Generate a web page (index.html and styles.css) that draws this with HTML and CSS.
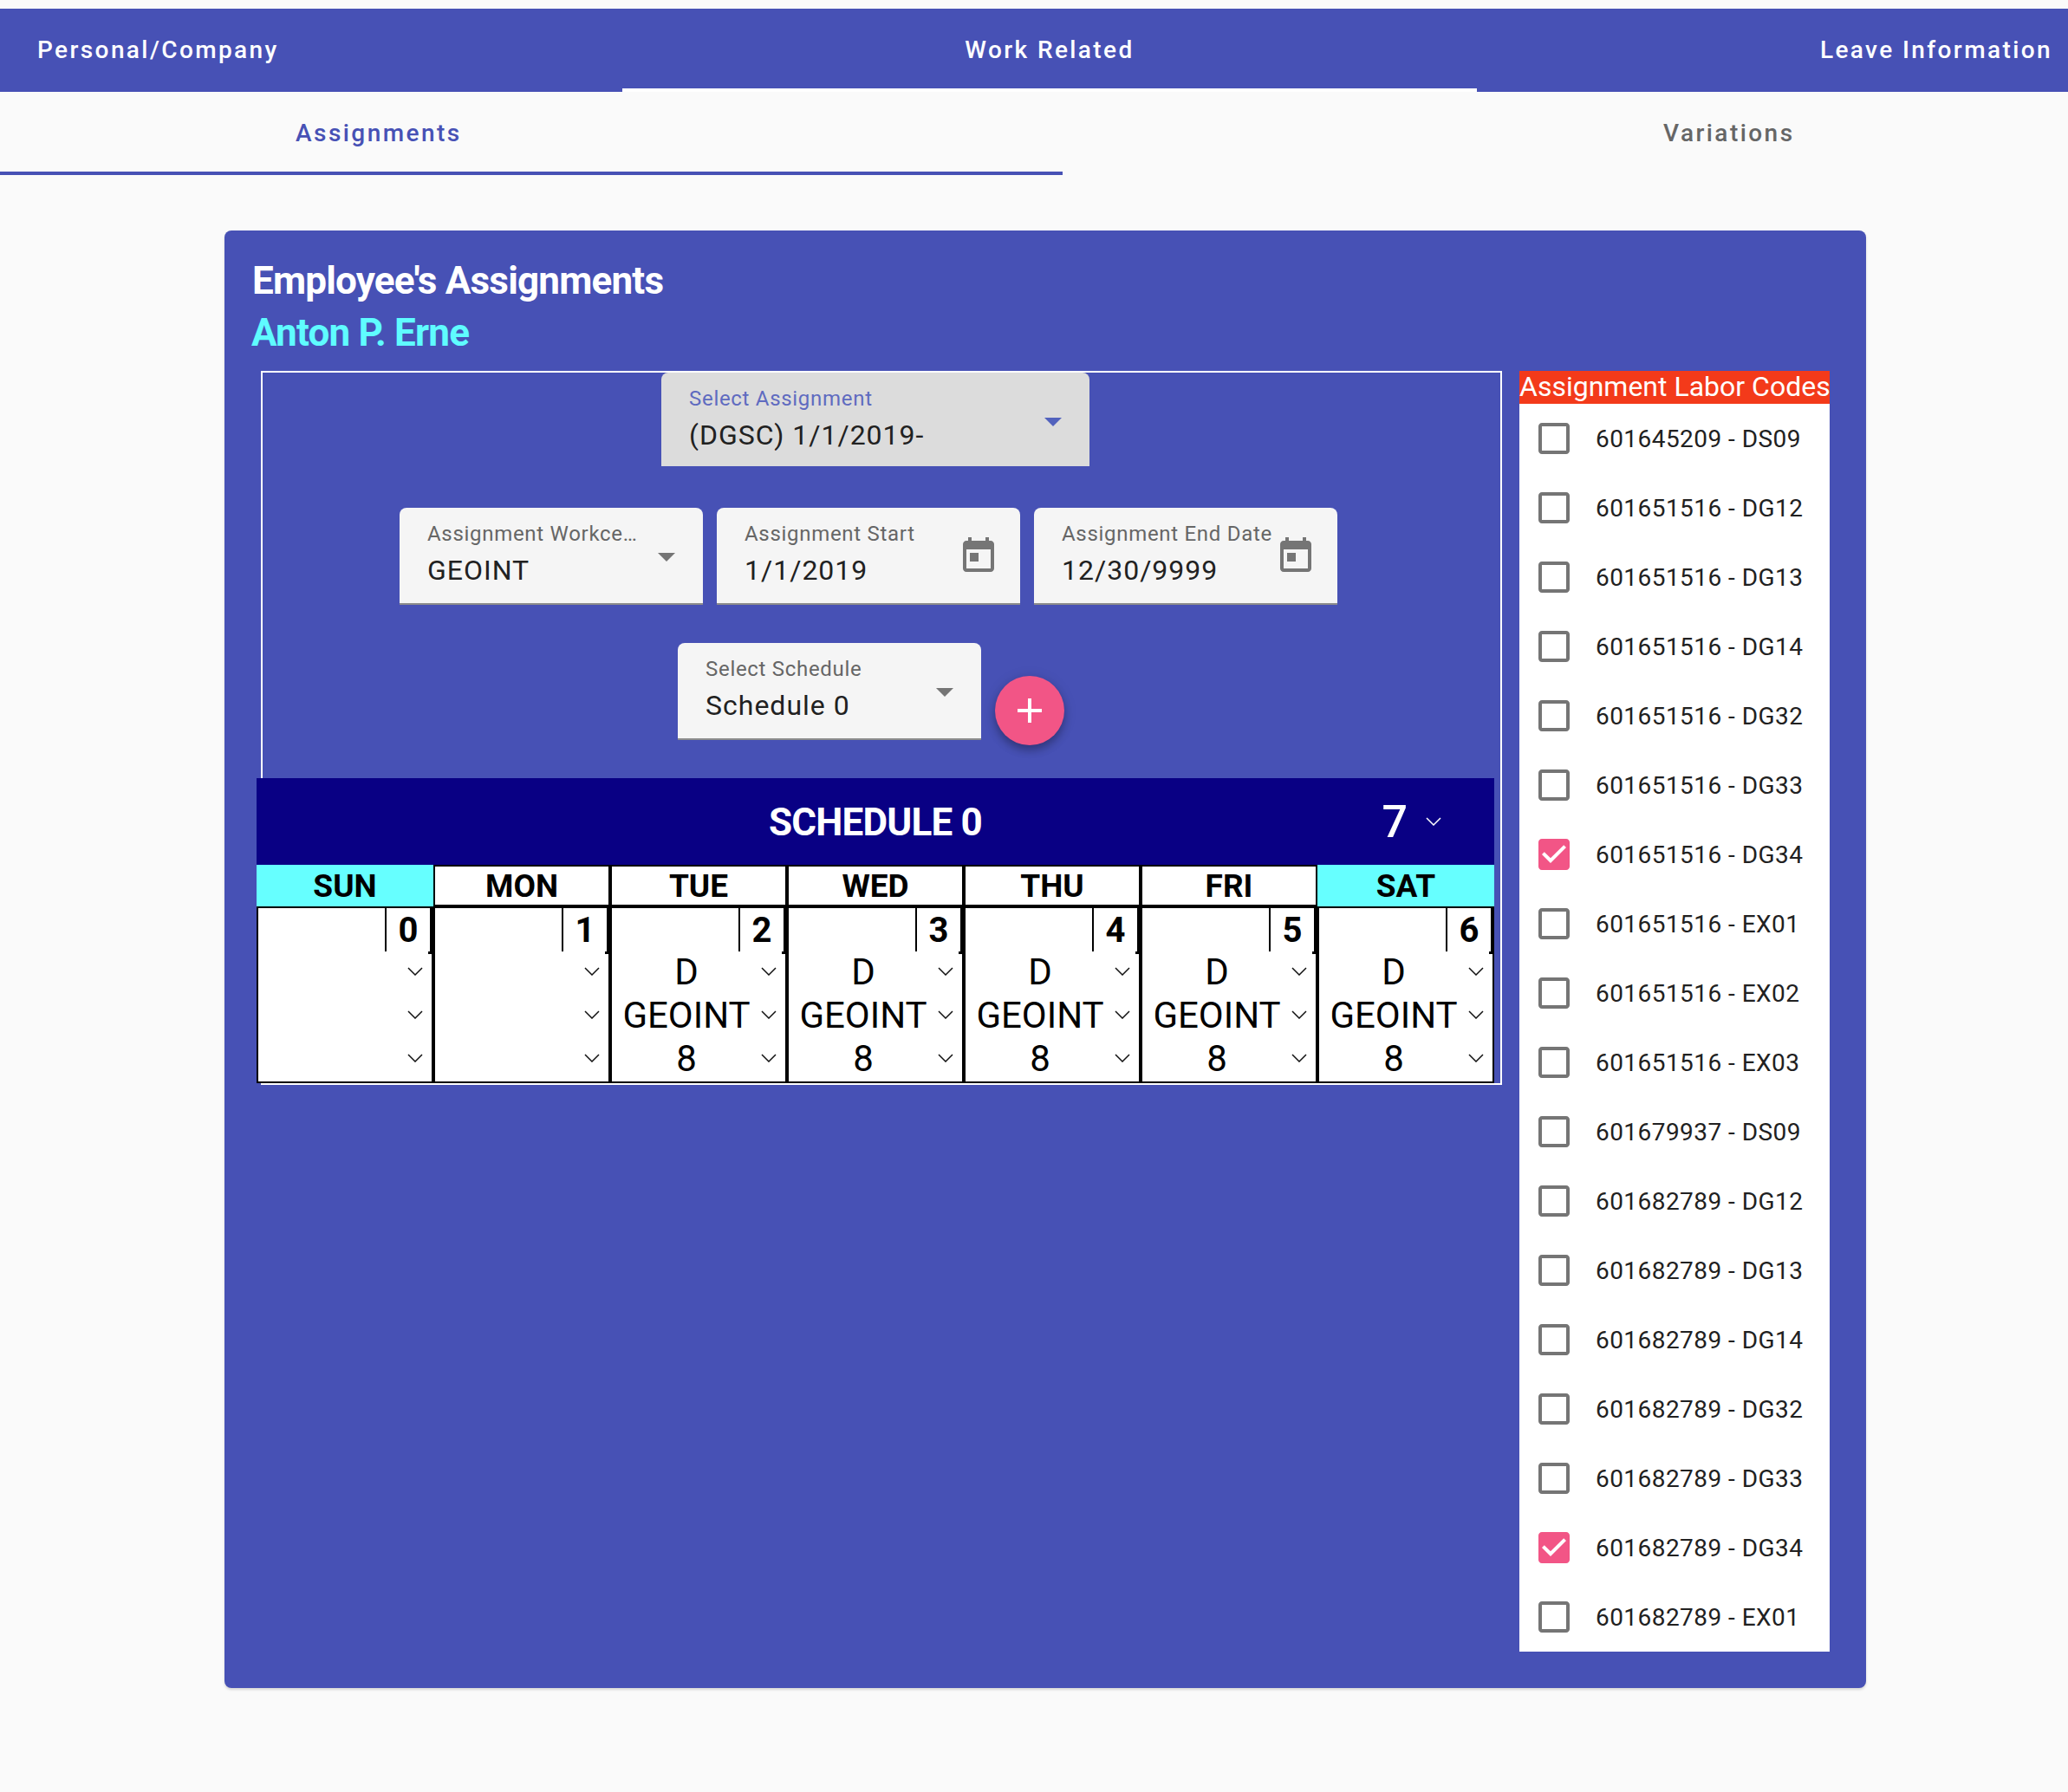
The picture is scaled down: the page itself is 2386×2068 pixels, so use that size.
FILE: index.html
```html
<!DOCTYPE html>
<html lang="en">
<head>
    <meta charset="UTF-8">
    <meta name="viewport" content="width=device-width, initial-scale=1.0">
    <title>Employee's Assignments</title>
    <link rel="stylesheet" href="styles.css">
</head>
<body>
    <svg class="defs" width="0" height="0">
        <symbol id="i-arrow" viewBox="0 0 24 24"><path d="M7 10l5 5 5-5z"/></symbol>
        <symbol id="i-today" viewBox="0 0 24 24"><path d="M19 3h-1V1h-2v2H8V1H6v2H5c-1.11 0-1.99.9-1.99 2L3 19c0 1.1.89 2 2 2h14c1.1 0 2-.9 2-2V5c0-1.1-.9-2-2-2zm0 16H5V8h14v11zM7 10h5v5H7z"/></symbol>
        <symbol id="i-add" viewBox="0 0 24 24"><path d="M19 13h-6v6h-2v-6H5v-2h6V5h2v6h6v2z"/></symbol>
        <symbol id="i-box" viewBox="0 0 24 24"><path d="M19 5v14H5V5h14m0-2H5c-1.1 0-2 .9-2 2v14c0 1.1.9 2 2 2h14c1.1 0 2-.9 2-2V5c0-1.1-.9-2-2-2z"/></symbol>
        <symbol id="i-checked" viewBox="0 0 24 24"><path d="M19 3H5c-1.11 0-2 .9-2 2v14c0 1.1.89 2 2 2h14c1.11 0 2-.9 2-2V5c0-1.1-.89-2-2-2zm-9 14l-5-5 1.41-1.41L10 14.17l7.59-7.59L19 8l-9 9z"/></symbol>
        <symbol id="i-chev" viewBox="0 0 18 10"><path d="M1 1l8 8 8-8" fill="none" stroke="currentColor" stroke-width="1.5"/></symbol>
    </svg>

    <nav class="main-tabs">
        <div class="main-tab first">Personal/Company</div>
        <div class="main-tab active">Work Related</div>
        <div class="main-tab last">Leave Information</div>
    </nav>

    <nav class="sub-tabs">
        <div class="sub-tab active">Assignments</div>
        <div class="sub-tab other">Variations</div>
    </nav>

    <main class="card">
        <h1 class="card-title">Employee's Assignments</h1>
        <h2 class="card-name">Anton P. Erne</h2>

        <div class="card-body">
            <section class="assign-box">
                <div class="form-row row-one">
                    <div class="field wide focused">
                        <div class="field-text">
                            <div class="field-label">Select Assignment</div>
                            <div class="field-value">(DGSC) 1/1/2019-</div>
                        </div>
                        <svg class="field-arrow"><use href="#i-arrow"/></svg>
                    </div>
                </div>

                <div class="form-row row-two">
                    <div class="field">
                        <div class="field-text">
                            <div class="field-label">Assignment Workce…</div>
                            <div class="field-value">GEOINT</div>
                        </div>
                        <svg class="field-arrow"><use href="#i-arrow"/></svg>
                    </div>
                    <div class="field">
                        <div class="field-text">
                            <div class="field-label">Assignment Start</div>
                            <div class="field-value">1/1/2019</div>
                        </div>
                        <svg class="field-date"><use href="#i-today"/></svg>
                    </div>
                    <div class="field">
                        <div class="field-text">
                            <div class="field-label">Assignment End Date</div>
                            <div class="field-value">12/30/9999</div>
                        </div>
                        <svg class="field-date"><use href="#i-today"/></svg>
                    </div>
                </div>

                <div class="form-row row-three">
                    <div class="field">
                        <div class="field-text">
                            <div class="field-label">Select Schedule</div>
                            <div class="field-value">Schedule 0</div>
                        </div>
                        <svg class="field-arrow"><use href="#i-arrow"/></svg>
                    </div>
                    <div class="fab"><svg><use href="#i-add"/></svg></div>
                </div>

                <div class="schedule">
                    <div class="sched-head">
                        <span></span>
                        <div class="sched-title">SCHEDULE 0</div>
                        <div class="sched-hours">
                            <span>7</span>
                            <svg class="chev"><use href="#i-chev"/></svg>
                        </div>
                    </div>

                    <div class="week">
                        <div class="day-head weekend">SUN</div>
                        <div class="day-head">MON</div>
                        <div class="day-head">TUE</div>
                        <div class="day-head">WED</div>
                        <div class="day-head">THU</div>
                        <div class="day-head">FRI</div>
                        <div class="day-head weekend">SAT</div>

                        <div class="day">
                            <div class="day-num">0</div>
                            <div class="pick"><span></span><svg class="chev"><use href="#i-chev"/></svg></div>
                            <div class="pick"><span></span><svg class="chev"><use href="#i-chev"/></svg></div>
                            <div class="pick"><span></span><svg class="chev"><use href="#i-chev"/></svg></div>
                        </div>
                        <div class="day">
                            <div class="day-num">1</div>
                            <div class="pick"><span></span><svg class="chev"><use href="#i-chev"/></svg></div>
                            <div class="pick"><span></span><svg class="chev"><use href="#i-chev"/></svg></div>
                            <div class="pick"><span></span><svg class="chev"><use href="#i-chev"/></svg></div>
                        </div>
                        <div class="day">
                            <div class="day-num">2</div>
                            <div class="pick"><span>D</span><svg class="chev"><use href="#i-chev"/></svg></div>
                            <div class="pick"><span>GEOINT</span><svg class="chev"><use href="#i-chev"/></svg></div>
                            <div class="pick"><span>8</span><svg class="chev"><use href="#i-chev"/></svg></div>
                        </div>
                        <div class="day">
                            <div class="day-num">3</div>
                            <div class="pick"><span>D</span><svg class="chev"><use href="#i-chev"/></svg></div>
                            <div class="pick"><span>GEOINT</span><svg class="chev"><use href="#i-chev"/></svg></div>
                            <div class="pick"><span>8</span><svg class="chev"><use href="#i-chev"/></svg></div>
                        </div>
                        <div class="day">
                            <div class="day-num">4</div>
                            <div class="pick"><span>D</span><svg class="chev"><use href="#i-chev"/></svg></div>
                            <div class="pick"><span>GEOINT</span><svg class="chev"><use href="#i-chev"/></svg></div>
                            <div class="pick"><span>8</span><svg class="chev"><use href="#i-chev"/></svg></div>
                        </div>
                        <div class="day">
                            <div class="day-num">5</div>
                            <div class="pick"><span>D</span><svg class="chev"><use href="#i-chev"/></svg></div>
                            <div class="pick"><span>GEOINT</span><svg class="chev"><use href="#i-chev"/></svg></div>
                            <div class="pick"><span>8</span><svg class="chev"><use href="#i-chev"/></svg></div>
                        </div>
                        <div class="day">
                            <div class="day-num">6</div>
                            <div class="pick"><span>D</span><svg class="chev"><use href="#i-chev"/></svg></div>
                            <div class="pick"><span>GEOINT</span><svg class="chev"><use href="#i-chev"/></svg></div>
                            <div class="pick"><span>8</span><svg class="chev"><use href="#i-chev"/></svg></div>
                        </div>
                    </div>
                </div>
            </section>

            <aside class="labor">
                <div class="labor-title">Assignment Labor Codes</div>
                <div class="labor-item"><svg class="off"><use href="#i-box"/></svg><span>601645209 - DS09</span></div>
                <div class="labor-item"><svg class="off"><use href="#i-box"/></svg><span>601651516 - DG12</span></div>
                <div class="labor-item"><svg class="off"><use href="#i-box"/></svg><span>601651516 - DG13</span></div>
                <div class="labor-item"><svg class="off"><use href="#i-box"/></svg><span>601651516 - DG14</span></div>
                <div class="labor-item"><svg class="off"><use href="#i-box"/></svg><span>601651516 - DG32</span></div>
                <div class="labor-item"><svg class="off"><use href="#i-box"/></svg><span>601651516 - DG33</span></div>
                <div class="labor-item"><svg class="on"><use href="#i-checked"/></svg><span>601651516 - DG34</span></div>
                <div class="labor-item"><svg class="off"><use href="#i-box"/></svg><span>601651516 - EX01</span></div>
                <div class="labor-item"><svg class="off"><use href="#i-box"/></svg><span>601651516 - EX02</span></div>
                <div class="labor-item"><svg class="off"><use href="#i-box"/></svg><span>601651516 - EX03</span></div>
                <div class="labor-item"><svg class="off"><use href="#i-box"/></svg><span>601679937 - DS09</span></div>
                <div class="labor-item"><svg class="off"><use href="#i-box"/></svg><span>601682789 - DG12</span></div>
                <div class="labor-item"><svg class="off"><use href="#i-box"/></svg><span>601682789 - DG13</span></div>
                <div class="labor-item"><svg class="off"><use href="#i-box"/></svg><span>601682789 - DG14</span></div>
                <div class="labor-item"><svg class="off"><use href="#i-box"/></svg><span>601682789 - DG32</span></div>
                <div class="labor-item"><svg class="off"><use href="#i-box"/></svg><span>601682789 - DG33</span></div>
                <div class="labor-item"><svg class="on"><use href="#i-checked"/></svg><span>601682789 - DG34</span></div>
                <div class="labor-item"><svg class="off"><use href="#i-box"/></svg><span>601682789 - EX01</span></div>
            </aside>
        </div>
    </main>
</body>
</html>
```

FILE: styles.css
```css
* {
    box-sizing: border-box;
}
html, body {
    height: 100%;
}
body {
    margin: 0;
    padding-top: 10px;
    background-color: #fafafa;
    font-family: Roboto, "Noto Sans", sans-serif;
    overflow: hidden;
}
.defs {
    position: absolute;
}

/* top tabs */
.main-tabs {
    display: grid;
    grid-template-columns: 718px 986px 682px;
    height: 96px;
    background-color: #4751b5;
    color: #fff;
    font-size: 28px;
    font-weight: 500;
    letter-spacing: 2.4px;
}
.main-tab {
    display: flex;
    align-items: center;
    justify-content: center;
    padding-bottom: 1px;
}
.main-tab.first {
    justify-content: flex-start;
    padding-left: 43px;
}
.main-tab.last {
    justify-content: flex-end;
    padding-right: 18px;
}
.main-tab.active {
    box-shadow: inset 0 -4px 0 #fff;
}

/* second row of tabs */
.sub-tabs {
    display: grid;
    grid-template-columns: 1226px 1160px;
    height: 96px;
    font-size: 28px;
    font-weight: 500;
    letter-spacing: 2.45px;
}
.sub-tab {
    display: flex;
    align-items: center;
    padding-bottom: 1px;
}
.sub-tab.active {
    color: #4751b5;
    padding-left: 341px;
    box-shadow: inset 0 -4px 0 #4751b5;
}
.sub-tab.other {
    color: #666;
    padding-left: 693px;
}

/* card */
.card {
    width: 1894px;
    height: 1682px;
    margin: 64px 0 0 259px;
    padding: 33px 32px 0;
    background-color: #4751b5;
    border-radius: 8px;
    box-shadow: 0 2px 3px rgba(0, 0, 0, 0.15);
}
.card-title {
    margin: 0;
    font-size: 44px;
    line-height: 50px;
    font-weight: 700;
    letter-spacing: -0.8px;
    color: #fff;
}
.card-name {
    margin: 10px 0 0 -1px;
    font-size: 44px;
    line-height: 50px;
    font-weight: 700;
    letter-spacing: -0.8px;
    color: #5ffcff;
}
.card-body {
    display: flex;
    align-items: flex-start;
    gap: 20px;
    margin: 19px 0 0 10px;
}

/* white outlined box on the left */
.assign-box {
    width: 1432px;
    height: 824px;
    border: 2px solid #fff;
}
.form-row {
    display: flex;
    gap: 16px;
}
.row-one {
    padding-left: 460px;
}
.row-two {
    padding-left: 158px;
    margin-top: 48px;
}
.row-three {
    padding-left: 479px;
    margin-top: 44px;
}

.field {
    display: flex;
    width: 350px;
    height: 112px;
    background-color: #f5f5f5;
    border-radius: 8px 8px 0 0;
    border-bottom: 2px solid #8c8c8c;
}
.field.wide {
    width: 494px;
    height: 108px;
}
.field.focused {
    background-color: #dcdcdc;
    border-bottom: none;
}
.field-text {
    flex: 1;
    min-width: 0;
    padding: 16px 0 0 32px;
}
.field-label {
    font-size: 24px;
    line-height: 28px;
    letter-spacing: 0.7px;
    color: #666;
    white-space: nowrap;
}
.focused .field-label {
    color: #5f6bc0;
}
.field-value {
    margin-top: 13px;
    font-size: 32px;
    line-height: 30px;
    letter-spacing: 1px;
    color: #212121;
    white-space: nowrap;
}
.field-arrow {
    flex: none;
    width: 48px;
    height: 48px;
    margin: 32px 18px 0 0;
    fill: #757575;
}
.focused .field-arrow {
    fill: #5262bd;
}
.field-date {
    flex: none;
    width: 48px;
    height: 48px;
    margin: 32px 24px 0 0;
    fill: #757575;
}
.fab {
    display: flex;
    align-items: center;
    justify-content: center;
    width: 80px;
    height: 80px;
    margin-top: 38px;
    border-radius: 50%;
    background-color: #f25586;
    box-shadow: 0 6px 10px rgba(0, 0, 0, 0.25), 0 2px 16px rgba(0, 0, 0, 0.12);
}
.fab svg {
    width: 48px;
    height: 48px;
    fill: #fff;
}

/* schedule table */
.schedule {
    width: 1428px;
    margin: 38px 0 0 -7px;
}
.sched-head {
    display: grid;
    grid-template-columns: 1fr auto 1fr;
    align-items: center;
    height: 100px;
    background-color: #090084;
    color: #fff;
}
.sched-title {
    padding-top: 1px;
    font-size: 44px;
    font-weight: 700;
    letter-spacing: -0.8px;
}
.sched-hours {
    display: flex;
    align-items: center;
    justify-content: flex-end;
    gap: 21px;
    padding-right: 61px;
    font-size: 52px;
    font-weight: 500;
}
.week {
    display: grid;
    grid-template-columns: repeat(7, 204px);
}
.day-head {
    height: 48px;
    border: 2px solid #000;
    background-color: #fff;
    font-size: 37px;
    font-weight: 700;
    line-height: 45px;
    text-align: center;
    color: #000;
}
.day-head.weekend {
    background-color: #66ffff;
    border-color: #66ffff;
}
.day {
    position: relative;
    height: 204px;
    border: 2px solid #000;
    background-color: #fff;
}
.day-num {
    position: relative;
    width: 54px;
    height: 50px;
    margin-left: auto;
    margin-bottom: -2px;
    border-left: 2px solid #000;
    border-right: 2px solid #000;
    font-size: 40px;
    font-weight: 700;
    line-height: 51px;
    text-align: center;
    color: #000;
}
.day-num::after {
    content: "";
    position: absolute;
    right: -2px;
    bottom: -3px;
    width: 4px;
    height: 3px;
    background-color: #000;
}
.pick {
    display: flex;
    align-items: center;
    height: 50px;
    font-size: 42px;
    color: #000;
}
.pick span {
    width: 172px;
    text-align: center;
}
.chev {
    flex: none;
    width: 18px;
    height: 10px;
}
.pick .chev {
    color: #111;
}

/* labor codes list */
.labor {
    width: 358px;
    background-color: #fff;
}
.labor-title {
    height: 38px;
    background-color: #f33a1a;
    color: #fff;
    font-size: 32px;
    line-height: 36px;
    white-space: nowrap;
}
.labor-item {
    display: flex;
    align-items: center;
    gap: 24px;
    height: 80px;
    padding-left: 16px;
    font-size: 28px;
    letter-spacing: 0.45px;
    color: #212121;
}
.labor-item svg {
    flex: none;
    width: 48px;
    height: 48px;
}
.labor-item .off {
    fill: #757575;
}
.labor-item .on {
    fill: #f25586;
}
```
